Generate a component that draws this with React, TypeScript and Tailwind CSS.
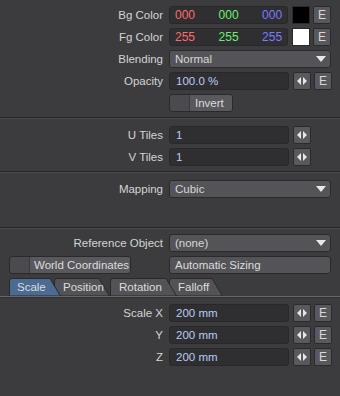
import React from 'react';

const FONT = "font-['Liberation_Sans',Arial,sans-serif]";

function Label({ text }: { text: string }) {
  return <div className="w-[164px] shrink-0 pr-[1px] text-right text-[#d4d4d4] leading-[18px] whitespace-nowrap">{text}</div>;
}

function Field({ value, w = 'w-[120px]' }: { value: string; w?: string }) {
  return (
    <div className={`${w} h-[18px] rounded-[3px] border border-[#28282a] bg-[#2f2f32] px-[6px] text-[#b9cbf2] leading-[16px] whitespace-nowrap`}>
      {value}
    </div>
  );
}

function Arrows() {
  return (
    <div className="w-[18px] h-[18px] rounded-[2px] border border-[#2a2a2c] bg-[#59595d] flex items-center justify-center">
      <svg width="10" height="8" viewBox="0 0 10 8">
        <polygon points="4,0 4,8 0,4" fill="#e6e6e6" />
        <polygon points="6,0 6,8 10,4" fill="#e6e6e6" />
      </svg>
    </div>
  );
}

function EBtn() {
  return (
    <div className="w-[18px] h-[18px] rounded-[2px] border border-[#2a2a2c] bg-[#59595d] text-center text-[12px] text-[#d8d8d8] leading-[16px]">
      E
    </div>
  );
}

function Dropdown({ value }: { value: string }) {
  return (
    <div className="w-[162px] h-[18px] rounded-[3px] border border-[#2a2a2c] bg-[#545458] pl-[5px] pr-[4px] flex items-center justify-between text-[#d6d6d6]">
      <span className="leading-[16px]">{value}</span>
      <svg width="10" height="6" viewBox="0 0 10 6">
        <polygon points="0,0 10,0 5,6" fill="#e8e8e8" />
      </svg>
    </div>
  );
}

function Sep() {
  return <div className="h-[2px] border-t border-[#262628] border-b border-b-[#4b4b4f]" />;
}

function Row({ children }: { children: React.ReactNode }) {
  return <div className="flex items-center h-[18px] gap-[4px]">{children}</div>;
}

function ColorRow({ label, v, swatch }: { label: string; v: string; swatch: string }) {
  return (
    <Row>
      <Label text={label} />
      <div className="ml-[1px] w-[120px] h-[18px] rounded-[3px] border border-[#28282a] bg-[#2f2f32] px-[5px] flex justify-between leading-[16px] text-[12px]">
        <span className="text-[#ff6a6a]">{v}</span>
        <span className="text-[#6cf06c]">{v}</span>
        <span className="text-[#7c7cff]">{v}</span>
      </div>
      <div className={`w-[18px] h-[18px] border border-[#2a2a2c] ${swatch}`} />
      <div className="-ml-[1px]"><EBtn /></div>
    </Row>
  );
}

function Tab({ label, w, active, z, ml, pl }: { label: string; w: number; active?: boolean; z: string; ml: string; pl: string }) {
  const fill = active ? '#4b6b93' : '#535357';
  return (
    <div className={`relative h-[18px] ${z} ${ml}`} style={{ width: w }}>
      <svg className="absolute inset-0" width={w} height="18" viewBox={`0 0 ${w} 18`}>
        <path d={`M0.5,18 L0.5,3 Q0.5,0.5 3,0.5 L${w - 11},0.5 L${w - 0.5},18 Z`} fill={fill} stroke="#29292b" />
      </svg>
      <span className={`relative block ${pl} leading-[18px] text-[#dcdcdc] whitespace-nowrap`}>{label}</span>
    </div>
  );
}

export default function App() {
  return (
    <div className={`w-[340px] h-[396px] bg-[#3c3c3f] text-[11.5px] ${FONT} overflow-hidden select-none`}>
      <div className="pt-[6px] pr-[9px] flex flex-col gap-[4px]">
        <ColorRow label="Bg Color" v="000" swatch="bg-black" />
        <ColorRow label="Fg Color" v="255" swatch="bg-white" />
        <Row>
          <Label text="Blending" />
          <div className="ml-[1px]"><Dropdown value="Normal" /></div>
        </Row>
        <Row>
          <Label text="Opacity" />
          <div className="ml-[1px] flex gap-[4px]">
            <Field value="100.0 %" />
            <Arrows />
          </div>
          <div className="-ml-[1px]"><EBtn /></div>
        </Row>
        <Row>
          <div className="w-[164px] shrink-0" />
          <div className="ml-[1px] w-[64px] h-[18px] flex rounded-[3px] border border-[#2a2a2c] overflow-hidden">
            <div className="w-[20px] bg-[#4b4b4f] border-r border-[#3a3a3d]" />
            <div className="flex-1 bg-[#59595d] pl-[5px] text-[#dcdcdc] leading-[16px]">Invert</div>
          </div>
        </Row>
      </div>

      <div className="mt-[5px]"><Sep /></div>

      <div className="mt-[7px] pr-[9px] flex flex-col gap-[4px]">
        <Row>
          <Label text="U Tiles" />
          <div className="ml-[1px] flex gap-[4px]"><Field value="1" /><Arrows /></div>
        </Row>
        <Row>
          <Label text="V Tiles" />
          <div className="ml-[1px] flex gap-[4px]"><Field value="1" /><Arrows /></div>
        </Row>
      </div>

      <div className="mt-[5px]"><Sep /></div>

      <div className="mt-[7px] pr-[9px]">
        <Row>
          <Label text="Mapping" />
          <div className="ml-[1px]"><Dropdown value="Cubic" /></div>
        </Row>
      </div>

      <div className="mt-[29px]"><Sep /></div>

      <div className="mt-[5px] pr-[9px] flex flex-col gap-[4px]">
        <Row>
          <Label text="Reference Object" />
          <div className="ml-[1px]"><Dropdown value="(none)" /></div>
        </Row>
        <div className="flex h-[18px]">
          <div className="ml-[9px] w-[122px] h-[18px] flex rounded-[3px] border border-[#2a2a2c] overflow-hidden">
            <div className="w-[20px] shrink-0 bg-[#4b4b4f] border-r border-[#3a3a3d]" />
            <div className="flex-1 bg-[#59595d] pl-[4px] text-[#dcdcdc] leading-[16px] whitespace-nowrap">World Coordinates</div>
          </div>
          <div className="ml-[38px] w-[162px] h-[18px] rounded-[3px] border border-[#2a2a2c] bg-[#545458] pl-[5px] text-[#dcdcdc] leading-[16px] whitespace-nowrap">
            Automatic Sizing
          </div>
        </div>
        <div className="flex h-[18px] pl-[9px]">
          <Tab label="Scale" w={52} active z="z-[4]" ml="ml-0" pl="pl-[8px]" />
          <Tab label="Position" w={56} z="z-[3]" ml="-ml-[7px]" pl="pl-[9px]" />
          <Tab label="Rotation" w={67} z="z-[2]" ml="ml-0" pl="pl-[9px]" />
          <Tab label="Falloff" w={54} z="z-[1]" ml="-ml-[8px]" pl="pl-[9px]" />
        </div>
      </div>
      <div className="h-[2px] border-t border-[#67676b] border-b border-b-[#333336]" />

      <div className="mt-[6px] pr-[9px] flex flex-col gap-[4px]">
        {[['Scale X', '200 mm'], ['Y', '200 mm'], ['Z', '200 mm']].map(([l, v]) => (
          <Row key={l}>
            <Label text={l} />
            <div className="ml-[1px] flex gap-[4px]"><Field value={v} /><Arrows /></div>
            <div className="-ml-[1px]"><EBtn /></div>
          </Row>
        ))}
      </div>
    </div>
  );
}
